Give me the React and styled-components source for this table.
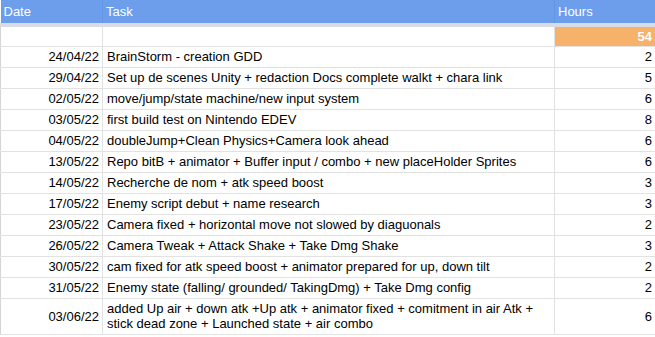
import React from "react";
import styled, { createGlobalStyle } from "styled-components";

const Global = createGlobalStyle`
  html, body { margin: 0; padding: 0; background: #fff; }
  body { font-family: "Liberation Sans", Arial, sans-serif; font-size: 13px; }
`;

const Sheet = styled.table`
  border-collapse: collapse;
  table-layout: fixed;
  width: 655px;
  font-family: "Liberation Sans", Arial, sans-serif;
  font-size: 13px;
  color: #000;
`;

const HeadCell = styled.th`
  height: 25px;
  padding: 0 3px 1px 3px;
  background: #6d9eeb;
  color: #fff;
  font-weight: normal;
  text-align: left;
  vertical-align: middle;
  border-right: 1px solid #6395e6;
  border-bottom: 4px solid #d9dce4;
  box-sizing: border-box;
  white-space: nowrap;
  &:last-child { border-right: 1px solid #cfd6e2; }
`;

const Row = styled.tr`
  height: ${(p) => p.$h || 21}px;
`;

const Cell = styled.td`
  padding: 0 3px 0 ${(p) => (p.$align === "left" ? 4 : 3)}px;
  text-align: ${(p) => p.$align || "left"};
  vertical-align: middle;
  line-height: 15px;
  border-right: 1px solid #e2e2e2;
  border-bottom: 1px solid #e2e2e2;
  box-sizing: border-box;
  &:first-child { border-left: 1px solid #d4d4d4; }
  &:last-child { border-right: 1px solid #d4d4d4; }
`;

const TotalCell = styled(Cell)`
  background: #f6b26b;
  color: #fff;
  font-weight: bold;
`;

const rows = [
  ["24/04/22", "BrainStorm - creation GDD", 2],
  ["29/04/22", "Set up de scenes Unity + redaction Docs complete walkt + chara link", 5],
  ["02/05/22", "move/jump/state machine/new input system", 6],
  ["03/05/22", "first build test on Nintendo EDEV", 8],
  ["04/05/22", "doubleJump+Clean Physics+Camera look ahead", 6],
  ["13/05/22", "Repo bitB + animator + Buffer input / combo + new placeHolder Sprites", 6],
  ["14/05/22", "Recherche de nom + atk speed boost", 3],
  ["17/05/22", "Enemy script debut + name research", 3],
  ["23/05/22", "Camera fixed + horizontal move not slowed by diaguonals", 2],
  ["26/05/22", "Camera Tweak + Attack Shake + Take Dmg Shake", 3],
  ["30/05/22", "cam fixed for atk speed boost + animator prepared for up, down tilt", 2],
  ["31/05/22", "Enemy state (falling/ grounded/ TakingDmg) + Take Dmg config", 2],
  ["03/06/22", "added Up air + down atk +Up atk + animator fixed + comitment in air Atk + stick dead zone + Launched state + air combo", 6, 36],
];

export default function App() {
  return (
    <>
      <Global />
      <Sheet>
        <colgroup>
          <col style={{ width: 102 }} />
          <col style={{ width: 452 }} />
          <col style={{ width: 101 }} />
        </colgroup>
        <thead>
          <tr>
            <HeadCell>Date</HeadCell>
            <HeadCell>Task</HeadCell>
            <HeadCell>Hours</HeadCell>
          </tr>
        </thead>
        <tbody>
          <Row $h={21}>
            <Cell />
            <Cell />
            <TotalCell $align="right">54</TotalCell>
          </Row>
          {rows.map(([d, t, h, rh]) => (
            <Row key={d} $h={rh}>
              <Cell $align="right">{d}</Cell>
              <Cell $align="left">{t}</Cell>
              <Cell $align="right">{h}</Cell>
            </Row>
          ))}
        </tbody>
      </Sheet>
    </>
  );
}
